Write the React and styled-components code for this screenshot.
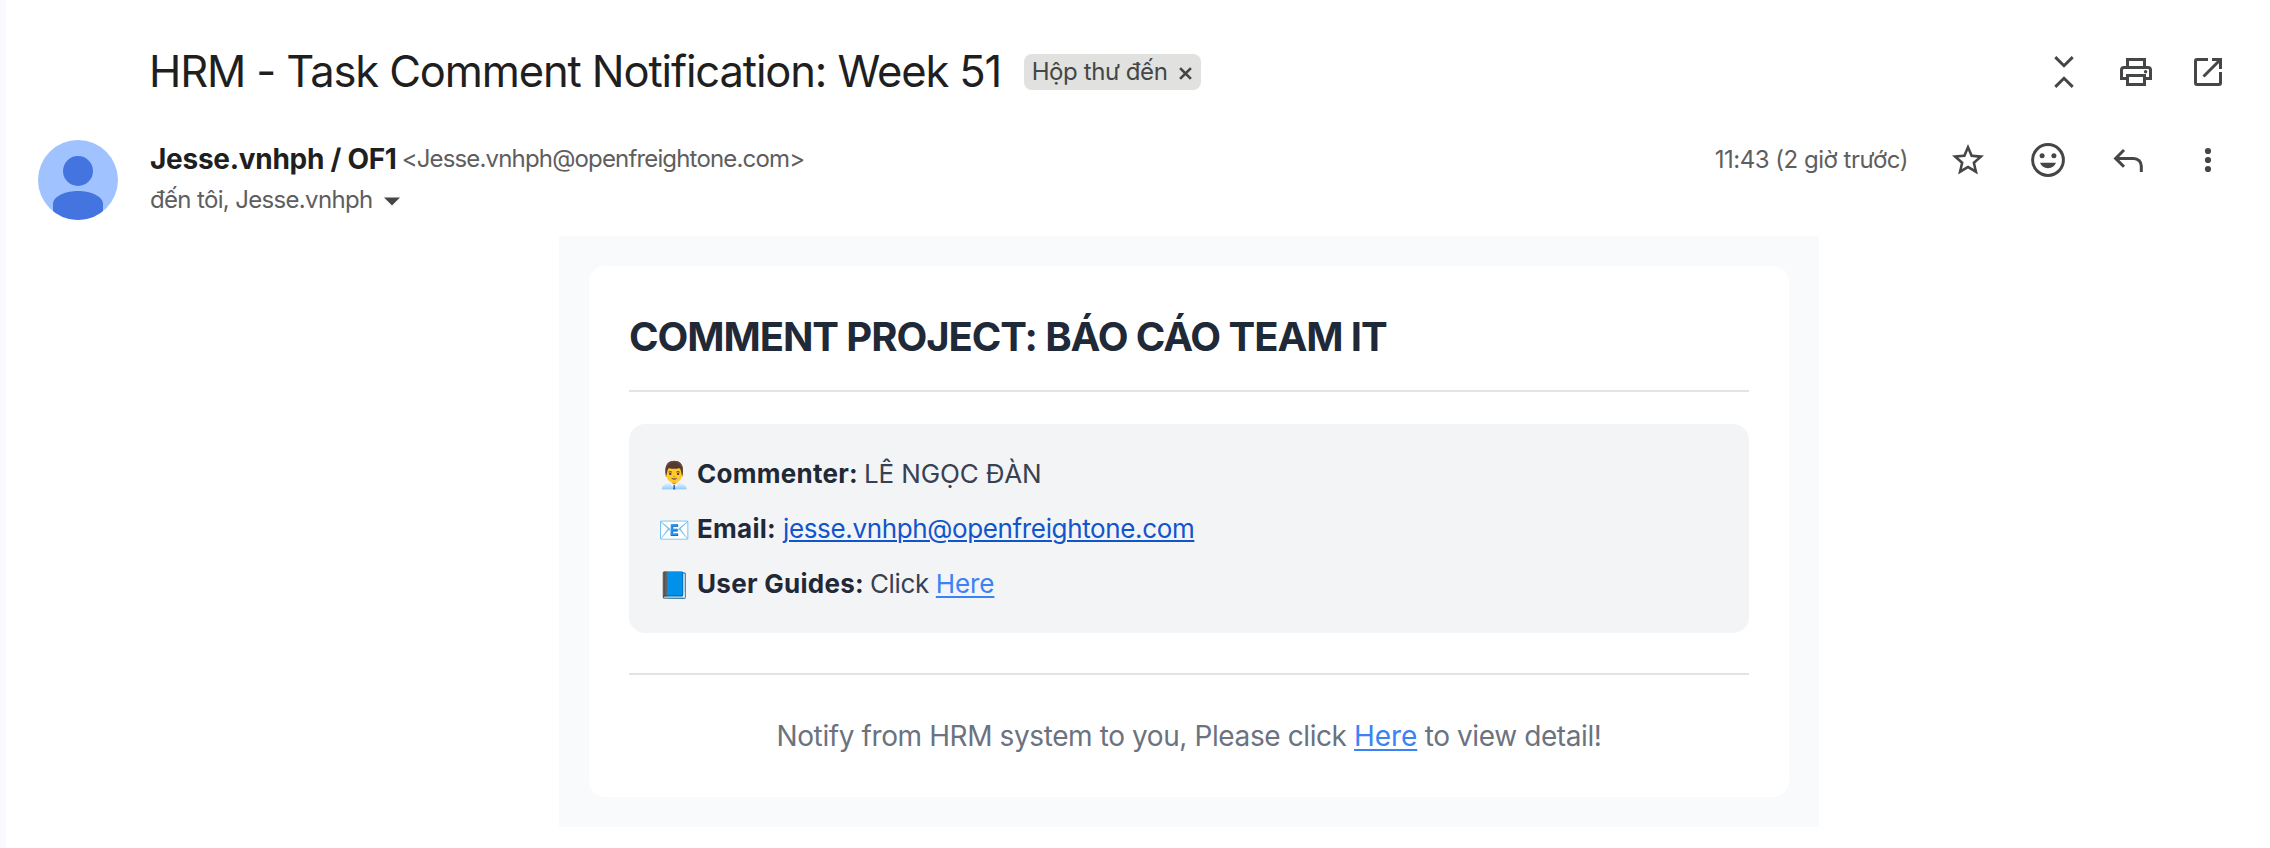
import React from "react";
import styled, { createGlobalStyle } from "styled-components";

const GlobalStyle = createGlobalStyle`
  * { box-sizing: border-box; }
  body {
    margin: 0;
    background: #fff;
    font-family: Inter, "Liberation Sans", sans-serif;
    font-kerning: normal;
  }
`;

const Page = styled.div`
  display: flex;
  height: 848px;
  overflow: hidden;
`;

const Edge = styled.div`
  width: 6px;
  flex: none;
  background: #f8fafd;
`;

const Message = styled.main`
  flex: 1;
  min-width: 0;
  display: flex;
  flex-direction: column;
  padding-top: 36px;
`;

const SubjectBar = styled.header`
  display: flex;
  align-items: center;
  height: 72px;
  padding: 0 42px 0 143px;
`;

const Subject = styled.h1`
  margin: -2px 0 0;
  font-size: 43.5px;
  font-weight: 380;
  line-height: 56px;
  letter-spacing: -1.12px;
  color: #1f1f1f;
  white-space: nowrap;
`;

const Label = styled.span`
  display: flex;
  align-items: center;
  justify-content: space-between;
  width: 177px;
  height: 36px;
  margin-left: 22.5px;
  padding: 0 9px 0 8px;
  border-radius: 8px;
  background: #e1e1df;
  color: #444746;
  font-size: 24px;
  line-height: 36px;
  letter-spacing: -0.4px;
  white-space: nowrap;
`;

const Actions = styled.div`
  display: flex;
  gap: ${(p) => p.$gap}px;
  margin-left: auto;
`;

const Icon = styled.svg`
  display: block;
  width: 40px;
  height: 40px;
  fill: none;
  stroke: #444746;
  stroke-width: 3;
`;

const SenderBar = styled.section`
  display: flex;
  height: 128px;
  padding: 32px 42px 0 32px;
`;

const Avatar = styled.svg`
  width: 80px;
  height: 80px;
  flex: none;
  margin-right: 32px;
`;

const SenderInfo = styled.div`
  display: flex;
  flex-direction: column;
  white-space: nowrap;
`;

const SenderLine = styled.div`
  display: flex;
  align-items: flex-start;
  height: 41px;
  line-height: 38px;
`;

const SenderName = styled.span`
  font-size: 28px;
  font-weight: 650;
  letter-spacing: -0.28px;
  color: #1f1f1f;
`;

const SenderAddress = styled.span`
  margin-left: 5px;
  font-size: 24px;
  letter-spacing: -0.837px;
  color: #5e5e5e;
`;

const Recipients = styled.div`
  display: flex;
  align-items: center;
  gap: 11px;
  font-size: 24px;
  line-height: 38px;
  letter-spacing: -0.663px;
  color: #5e5e5e;
`;

const Caret = styled.svg`
  width: 16px;
  height: 9px;
  margin-top: 2px;
  fill: #444746;
`;

const SenderActions = styled.div`
  display: flex;
  align-items: center;
  height: 40px;
  margin-left: auto;
`;

const Time = styled.time`
  margin: -1px 40px 0 0;
  font-size: 24px;
  letter-spacing: -0.5px;
  color: #5e5e5e;
  white-space: nowrap;
`;

const MailBody = styled.article`
  width: 1260px;
  height: 591px;
  margin-left: 553px;
  padding: 30px;
  background: #f9fafc;
`;

const Card = styled.div`
  display: flex;
  flex-direction: column;
  height: 531px;
  padding: 40px;
  border-radius: 16px;
  background: #fff;
`;

const CardTitle = styled.h2`
  flex: none;
  height: 86px;
  margin: 0;
  padding-top: 7px;
  border-bottom: 2px solid #e3e4ea;
  font-size: 40px;
  font-weight: 700;
  line-height: 48px;
  letter-spacing: -1.07px;
  color: #1f2937;
  white-space: nowrap;
`;

const Details = styled.div`
  flex: none;
  height: 209px;
  margin: 32px 0 40px;
  padding: 22px 30px;
  border-radius: 16px;
  background: #f3f4f6;
`;

const DetailRow = styled.p`
  display: flex;
  align-items: flex-start;
  height: 55px;
  margin: 0;
  font-size: 26px;
  line-height: 55px;
  letter-spacing: ${(p) => p.$tracking}px;
  color: #374151;
  white-space: pre;
`;

const Emoji = styled.span`
  width: 38px;
  flex: none;
  margin-left: -1px;
  margin-right: 1px;
  padding-top: 2px;
  font-family: "Noto Color Emoji", sans-serif;
  font-size: 26px;
  line-height: 55px;
  letter-spacing: 0;
`;

const Term = styled.strong`
  margin-right: ${(p) => p.$after}px;
  font-weight: 700;
  letter-spacing: 0.27px;
  color: #1f2937;
`;

const Link = styled.a`
  color: ${(p) => (p.$mail ? "#1155cc" : "#3b82f6")};
  letter-spacing: ${(p) => (p.$mail ? -0.36 : -0.1)}px;
  text-decoration: underline;
  text-decoration-thickness: 2px;
  text-underline-offset: ${(p) => (p.$mail ? 2 : 3)}px;
`;

const Footer = styled.footer`
  padding-top: 40px;
  border-top: 2px solid #e3e4ea;
  text-align: center;
  font-size: 28px;
  font-weight: 420;
  line-height: 42px;
  letter-spacing: -0.4px;
  color: #6b7280;
`;

const CollapseIcon = () => (
  <Icon viewBox="0 0 40 40"><path d="M11.3 5.1 20 13.7l8.7-8.6M11.3 34.9 20 26.3l8.7 8.6" /></Icon>
);
const PrintIcon = () => (
  <Icon viewBox="0 0 40 40">
    <path d="M11.5 15.5v-8h17v8M11.5 26.5h-6V18A2.5 2.5 0 0 1 8 15.5h24a2.5 2.5 0 0 1 2.5 2.5v8.5h-6M11.5 23.5h17v9h-17z" />
    <circle cx="29.6" cy="19.8" r="1.7" fill="#444746" stroke="none" />
  </Icon>
);
const OpenIcon = () => (
  <Icon viewBox="0 0 40 40">
    <path d="M20 7.5H9A1.5 1.5 0 0 0 7.5 9v22A1.5 1.5 0 0 0 9 32.5h22a1.5 1.5 0 0 0 1.5-1.5V20M24 7.5h8.5V17M32 8 15.5 24.5" />
  </Icon>
);
const StarIcon = () => (
  <Icon viewBox="0 0 40 40">
    <path
      fill="#444746"
      stroke="none"
      transform="translate(.8 .8) scale(1.6)"
      d="M22 9.24l-7.19-.62L12 2 9.19 8.63 2 9.24l5.46 4.73L5.82 21 12 17.27 18.18 21l-1.63-7.03L22 9.24zM12 15.4l-3.76 2.27 1-4.28-3.32-2.88 4.38-.38L12 6.1l1.71 4.04 4.38.38-3.32 2.88 1 4.28L12 15.4z"
    />
  </Icon>
);
const SmileIcon = () => (
  <Icon viewBox="0 0 40 40">
    <circle cx="20" cy="20" r="15.4" />
    <g fill="#444746" stroke="none">
      <circle cx="14.1" cy="15.8" r="2.5" />
      <circle cx="25.9" cy="15.8" r="2.5" />
      <path d="M12 22.7h16a8.6 8.6 0 0 1-16 0z" />
    </g>
  </Icon>
);
const ReplyIcon = () => (
  <Icon viewBox="0 0 40 40"><path d="M16 10 7.6 18.4l8.4 8.4M7.6 18.4h18.2a7.5 7.5 0 0 1 7.5 7.5V32" /></Icon>
);
const MoreIcon = () => (
  <Icon viewBox="0 0 40 40">
    <g fill="#444746" stroke="none">
      <circle cx="20" cy="11" r="3.1" />
      <circle cx="20" cy="20" r="3.1" />
      <circle cx="20" cy="29" r="3.1" />
    </g>
  </Icon>
);
const RemoveIcon = styled.svg`
  width: 13px;
  height: 13px;
  flex: none;
  margin-top: 3px;
  stroke: #444746;
  stroke-width: 2.5;
`;

export default function App() {
  return (
    <>
      <GlobalStyle />
      <Page>
        <Edge />
        <Message>
          <SubjectBar>
            <Subject>HRM - Task Comment Notification: Week 51</Subject>
            <Label>
              Hộp thư đến
              <RemoveIcon viewBox="0 0 12 12"><path d="M1 1l10 10M11 1 1 11" /></RemoveIcon>
            </Label>
            <Actions $gap={32}>
              <CollapseIcon />
              <PrintIcon />
              <OpenIcon />
            </Actions>
          </SubjectBar>

          <SenderBar>
            <Avatar viewBox="0 0 80 80">
              <clipPath id="avatar"><circle cx="40" cy="40" r="40" /></clipPath>
              <g clipPath="url(#avatar)">
                <path fill="#a0c3ff" d="M0 0h80v80H0z" />
                <g fill="#4374e0">
                  <circle cx="40" cy="31" r="15" />
                  <path d="M15 80V64c0-8.5 14-13 25-13s25 4.5 25 13v16z" />
                </g>
              </g>
            </Avatar>
            <SenderInfo>
              <SenderLine>
                <SenderName>Jesse.vnhph / OF1</SenderName>
                <SenderAddress>&lt;Jesse.vnhph@openfreightone.com&gt;</SenderAddress>
              </SenderLine>
              <Recipients>
                đến tôi, Jesse.vnhph
                <Caret viewBox="0 0 16 9"><path d="M0 .5h16l-8 8z" /></Caret>
              </Recipients>
            </SenderInfo>
            <SenderActions>
              <Time>11:43 (2 giờ trước)</Time>
              <Actions $gap={40}>
                <StarIcon />
                <SmileIcon />
                <ReplyIcon />
                <MoreIcon />
              </Actions>
            </SenderActions>
          </SenderBar>

          <MailBody>
            <Card>
              <CardTitle>COMMENT PROJECT: BÁO CÁO TEAM IT</CardTitle>
              <Details>
                <DetailRow $tracking={-0.15}>
                  <Emoji>👨‍💼</Emoji>
                  <Term $after={6}>Commenter:</Term>LÊ NGỌC ĐÀN
                </DetailRow>
                <DetailRow $tracking={-0.36}>
                  <Emoji>📧</Emoji>
                  <Term $after={7}>Email:</Term>
                  <Link $mail>jesse.vnhph@openfreightone.com</Link>
                </DetailRow>
                <DetailRow $tracking={-0.36}>
                  <Emoji>📘</Emoji>
                  <Term $after={6}>User Guides:</Term>{"Click "}
                  <Link>Here</Link>
                </DetailRow>
              </Details>
              <Footer>
                Notify from HRM system to you, Please click <Link>Here</Link> to view detail!
              </Footer>
            </Card>
          </MailBody>
        </Message>
      </Page>
    </>
  );
}
